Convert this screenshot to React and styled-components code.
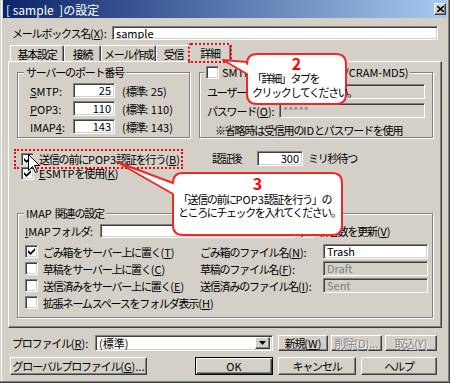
import React from "react";
import styled, { createGlobalStyle, css } from "styled-components";

const face = "#d4d0c8";
const light = "#ffffff";
const shadow = "#808080";
const dark = "#404040";
const red = "#f02828";

const GlobalStyle = createGlobalStyle`
  body { margin: 0; background: ${face}; }
  *, *::before, *::after { box-sizing: border-box; }
`;

const raised = css`
  border-top: 1px solid ${light};
  border-left: 1px solid ${light};
  border-right: 1px solid ${dark};
  border-bottom: 1px solid ${dark};
  box-shadow: inset -1px -1px 0 ${shadow};
`;

const sunken = css`
  border-top: 1px solid ${shadow};
  border-left: 1px solid ${shadow};
  border-right: 1px solid ${light};
  border-bottom: 1px solid ${light};
  box-shadow: inset 1px 1px 0 ${dark}, inset -1px -1px 0 ${face};
`;

const Window = styled.div`
  position: relative;
  width: 450px;
  height: 383px;
  padding: 0 3px 3px;
  background: ${face};
  font-family: "Noto Sans CJK JP", "Noto Sans CJK SC", sans-serif;
  font-size: 11px;
  letter-spacing: -1.2px;
  color: #000;
  overflow: hidden;
  box-shadow: inset -1px -1px 0 ${dark}, inset -2px -2px 0 ${shadow},
    inset 1px 0 0 ${face}, inset 2px 0 0 ${light};
`;

// ascii runs keep their natural spacing, kana/kanji are packed tighter
const Lat = styled.span`
  letter-spacing: 0;
`;

const Txt = ({ s }) =>
  s.split(/([\x20-\x7e]+)/).map((part, i) => {
    if (!part) return null;
    const content = part.split(/&(.)/).map((q, j) => (j % 2 ? <u key={j}>{q}</u> : q));
    return /^[\x20-\x7e]+$/.test(part) ? (
      <Lat key={i}>{content}</Lat>
    ) : (
      <React.Fragment key={i}>{content}</React.Fragment>
    );
  });

const TitleBar = styled.div`
  height: 18px;
  display: flex;
  align-items: center;
  padding: 0 1px 0 3px;
  background: linear-gradient(to right, #0a246a, #a6caf0);
  color: #fff;
  font-size: 12px;
  letter-spacing: 0;
  white-space: pre;
`;

const CloseBtn = styled.div`
  ${raised}
  margin-left: auto;
  width: 12px;
  height: 12px;
  background: ${face};
  display: flex;
  align-items: center;
  justify-content: center;
`;

const Body = styled.div`
  padding: 0 5px;
`;

const Row = styled.div`
  display: flex;
  align-items: center;
  height: ${p => p.$h || 14}px;
  margin-top: ${p => p.$mt || 0}px;
  padding-left: ${p => p.$pl || 0}px;
  white-space: nowrap;
`;

const Label = styled.span`
  flex: 0 0 ${p => p.$w}px;
  padding-left: ${p => p.$pl || 0}px;
  white-space: nowrap;
`;

const Text = styled.span`
  margin-left: ${p => p.$ml || 0}px;
  white-space: nowrap;
`;

const Field = styled.div`
  ${sunken}
  flex: 0 0 ${p => p.$w}px;
  width: ${p => p.$w}px;
  height: ${p => p.$h || 15}px;
  background: ${p => (p.$disabled ? face : light)};
  color: ${p => (p.$disabled ? shadow : "#000")};
  padding: 0 3px;
  display: flex;
  align-items: center;
  justify-content: ${p => (p.$right ? "flex-end" : "flex-start")};
  line-height: 1;
  letter-spacing: 0;
  font-size: 11px;
  white-space: nowrap;
  overflow: hidden;
`;

const Select = styled(Field)`
  padding-right: 2px;
`;

const DropBtn = styled.div`
  ${raised}
  margin-left: auto;
  width: 15px;
  height: 12px;
  background: ${face};
  display: flex;
  align-items: center;
  justify-content: center;
`;

const TabRow = styled.div`
  display: flex;
  align-items: flex-end;
  height: 16px;
  margin-top: 5px;
  padding-left: 2px;
  position: relative;
  z-index: 1;
`;

const Tab = styled.div`
  flex: 0 0 ${p => p.$w}px;
  height: ${p => (p.$active ? 18 : 16)}px;
  margin: ${p => (p.$active ? "0 -2px -1px -2px" : "0")};
  border-top: 1px solid ${light};
  border-left: 1px solid ${light};
  border-right: 1px solid ${dark};
  box-shadow: inset -1px 0 0 ${shadow};
  border-radius: 2px 2px 0 0;
  background: ${face};
  display: flex;
  align-items: center;
  justify-content: center;
  padding-bottom: ${p => (p.$active ? 2 : 0)}px;
  position: relative;
  z-index: ${p => (p.$active ? 2 : 1)};
  outline: ${p => (p.$marked ? `2px dotted #ff0000` : "none")};
  outline-offset: -1px;
`;

const Panel = styled.div`
  height: 267px;
  border-top: 1px solid ${light};
  border-left: 1px solid ${light};
  border-right: 1px solid ${dark};
  border-bottom: 1px solid ${dark};
  box-shadow: inset -1px -1px 0 ${shadow};
  padding: 10px 8px 0 8px;
`;

const GroupRow = styled.div`
  display: flex;
  gap: 9px;
`;

const Group = styled.div`
  position: relative;
  flex: 0 0 ${p => p.$w}px;
  width: ${p => p.$w}px;
  height: ${p => (p.$h ? `${p.$h}px` : "auto")};
  margin-top: ${p => p.$mt || 0}px;
  border: 1px solid ${shadow};
  box-shadow: inset 1px 1px 0 ${light}, 1px 1px 0 ${light};
  padding: ${p => p.$pad};
`;

const Legend = styled.div`
  position: absolute;
  top: -7px;
  left: ${p => p.$l || 6}px;
  padding: 0 2px;
  background: ${face};
  line-height: 13px;
  height: 13px;
  display: flex;
  align-items: center;
  gap: 3px;
  white-space: nowrap;
`;

const Stack = styled.div`
  display: flex;
  flex-direction: column;
  gap: ${p => p.$gap || 0}px;
`;

const Box = styled.span`
  ${sunken}
  flex: 0 0 13px;
  width: 13px;
  height: 13px;
  background: #fff;
  display: inline-flex;
  align-items: center;
  justify-content: center;
`;

const CheckLine = styled.span`
  display: inline-flex;
  align-items: center;
  gap: ${p => p.$gap || 5}px;
  height: 14px;
  padding-left: ${p => p.$pl || 0}px;
  outline: ${p => (p.$marked ? "2px dotted #ff0000" : "none")};
  outline-offset: 1px;
  white-space: nowrap;
`;

const ImapGrid = styled.div`
  display: grid;
  grid-template-columns: 175px 123px 105px;
  grid-auto-rows: 17px;
  align-items: center;
  margin-top: 5px;
`;

const Button = styled.div`
  ${raised}
  flex: 0 0 ${p => p.$w}px;
  height: ${p => p.$h || 17}px;
  margin-left: ${p => p.$ml || 0}px;
  background: ${face};
  display: flex;
  align-items: center;
  justify-content: center;
  white-space: nowrap;
  color: ${p => (p.$disabled ? shadow : "#000")};
  text-shadow: ${p => (p.$disabled ? `1px 1px 0 ${light}` : "none")};
  ${p =>
    p.$default &&
    css`
      border: 1px solid #000;
      box-shadow: inset 1px 1px 0 ${light}, inset -1px -1px 0 ${dark},
        inset -2px -2px 0 ${shadow};
    `}
`;

const CalloutWrap = styled.div`
  position: absolute;
  left: ${p => p.$x}px;
  top: ${p => p.$y}px;
  width: ${p => p.$w}px;
  height: ${p => p.$h}px;
  z-index: 10;
`;

const BubbleSvg = styled.svg`
  position: absolute;
  left: 0;
  top: 0;
  overflow: visible;
`;

const CalloutBody = styled.div`
  position: relative;
  margin-left: ${p => p.$bx}px;
  padding-top: ${p => p.$pt}px;
  width: ${p => p.$bw}px;
`;

const Num = styled.div`
  text-align: center;
  color: #ff0000;
  font-size: 16px;
  font-weight: bold;
  letter-spacing: 0;
  line-height: 16px;
  margin-bottom: ${p => p.$mb || 0}px;
`;

const CalloutLines = styled.div`
  padding-left: 6px;
  font-size: 11px;
  letter-spacing: -1.4px;
  line-height: ${p => p.$lh}px;
  white-space: nowrap;
`;

const Cursor = styled.svg`
  position: absolute;
  left: 28px;
  top: 154px;
  z-index: 9;
`;

const bubblePath = (x0, y0, x1, y1, r, tb, bb, tx, ty) =>
  `M${x0 + r} ${y0} H${x1 - r} Q${x1} ${y0} ${x1} ${y0 + r} V${y1 - r} Q${x1} ${y1} ${x1 - r} ${y1} H${x0 + r} Q${x0} ${y1} ${x0} ${y1 - r} V${bb} L${tx} ${ty} L${x0} ${tb} V${y0 + r} Q${x0} ${y0} ${x0 + r} ${y0} Z`;

const Check = ({ checked }) => (
  <Box>
    {checked && (
      <svg width="7" height="7" viewBox="0 0 7 7">
        <path d="M0 2 L2.5 4.5 L7 0 V2.5 L2.5 7 L0 4.5 Z" fill="#000" />
      </svg>
    )}
  </Box>
);

const Callout = ({ x, y, w, h, path, bx, bw, pt, num, numGap, lh, lines }) => (
  <CalloutWrap $x={x} $y={y} $w={w} $h={h}>
    <BubbleSvg width={w} height={h}>
      <path d={path} fill="#fff" stroke={red} strokeWidth="2" strokeLinejoin="round" />
    </BubbleSvg>
    <CalloutBody $bx={bx} $bw={bw} $pt={pt}>
      <Num $mb={numGap}>{num}</Num>
      <CalloutLines $lh={lh}>
        {lines.map(l => (
          <div key={l}>
            <Txt s={l} />
          </div>
        ))}
      </CalloutLines>
    </CalloutBody>
  </CalloutWrap>
);

const tabs = [
  { t: "基本設定", w: 54 },
  { t: "接続", w: 37 },
  { t: "メール作成", w: 55 },
  { t: "受信", w: 35 },
  { t: "詳細", w: 42, active: true },
];

const ports = [
  { l: "&SMTP:", v: "25" },
  { l: "&POP3:", v: "110" },
  { l: "IMAP&4:", v: "143" },
];

const imapRows = [
  { c: true, l: "ごみ箱をサーバー上に置く(&T)", r: "ごみ箱のファイル名(&N):", v: "Trash" },
  { c: false, l: "草稿をサーバー上に置く(&C)", r: "草稿のファイル名(&F):", v: "Draft", d: true },
  { c: false, l: "送信済みをサーバー上に置く(&E)", r: "送信済みのファイル名(&I):", v: "Sent", d: true },
  { c: false, l: "拡張ネームスペースをフォルダ表示(&H)" },
];

export default function App() {
  return (
    <>
      <GlobalStyle />
      <Window>
        <TitleBar>
          <span>[ sample  ]の設定</span>
          <CloseBtn>
            <svg width="7" height="6" viewBox="0 0 7 6">
              <path d="M0 0 L7 6 M7 0 L0 6" stroke="#000" strokeWidth="1.6" />
            </svg>
          </CloseBtn>
        </TitleBar>
        <Body>
          <Row $mt={8} $h={14}>
            <Label $w={104} $pl={4}><Txt s="メールボックス名(&X):" /></Label>
            <Field $w={326} $h={14}>sample</Field>
          </Row>

          <TabRow>
            {tabs.map(tab => (
              <Tab key={tab.t} $w={tab.w} $active={tab.active} $marked={tab.active}>
                {tab.t}
              </Tab>
            ))}
          </TabRow>

          <Panel>
            <GroupRow>
              <Group $w={173} $h={66} $pad="10px 0 0 12px">
                <Legend>サーバーのポート番号</Legend>
                <Stack $gap={3}>
                  {ports.map(p => (
                    <Row key={p.v} $h={15}>
                      <Label $w={43}><Txt s={p.l} /></Label>
                      <Field $w={42} $right>{p.v}</Field>
                      <Text $ml={7}><Txt s={`(標準: ${p.v})`} /></Text>
                    </Row>
                  ))}
                </Stack>
              </Group>

              <Group $w={234} $h={66} $pad="11px 7px 0 7px">
                <Legend $l={4}>
                  <Check />
                  <span><Txt s="SMTP認証 (PLAIN/LOGIN/CRAM-MD5)" /></span>
                </Legend>
                <Stack $gap={4}>
                  <Row $h={15}>
                    <Label $w={72}><Txt s="ユーザーID(&U):" /></Label>
                    <Field $w={146} $disabled />
                  </Row>
                  <Row $h={15}>
                    <Label $w={72}><Txt s="パスワード(&O):" /></Label>
                    <Field $w={146} $disabled>*****</Field>
                  </Row>
                  <Row $h={15} $pl={8}><Txt s="※省略時は受信用のIDとパスワードを使用" /></Row>
                </Stack>
              </Group>
            </GroupRow>

            <Row $mt={13} $h={14}>
              <Label $w={195}>
                <CheckLine $marked $pl={4}>
                  <Check checked />
                  <span><Txt s="送信の前にPOP3認証を行う(&B)" /></span>
                </CheckLine>
              </Label>
              <Label $w={45}>認証後</Label>
              <Field $w={46} $right>300</Field>
              <Text $ml={5}>ミリ秒待つ</Text>
            </Row>
            <Row $mt={1} $h={14}>
              <CheckLine $pl={4}>
                <Check checked />
                <span><Txt s="&ESMTPを使用(&K)" /></span>
              </CheckLine>
            </Row>

            <Group $w={416} $mt={33} $pad="10px 0 6px 7px">
              <Legend><Txt s="IMAP関連の設定" /></Legend>
              <Row $h={14}>
                <Label $w={75}><Txt s="&IMAPフォルダ:" /></Label>
                <Field $w={195} $h={14} />
                <CheckLine $pl={6} $gap={4}>
                  <Check />
                  <span><Txt s="新着数を更新(&V)" /></span>
                </CheckLine>
              </Row>
              <ImapGrid>
                {imapRows.map((r, i) => (
                  <React.Fragment key={i}>
                    <CheckLine>
                      <Check checked={r.c} />
                      <span><Txt s={r.l} /></span>
                    </CheckLine>
                    <span>{r.r && <Txt s={r.r} />}</span>
                    {r.v ? <Field $w={105} $disabled={r.d}>{r.v}</Field> : <span />}
                  </React.Fragment>
                ))}
              </ImapGrid>
            </Group>
          </Panel>

          <Row $mt={7} $h={16}>
            <Label $w={87} $pl={4}><Txt s="プロファイル(&R):" /></Label>
            <Select $w={178} $h={16}>
              (標準)
              <DropBtn>
                <svg width="7" height="4" viewBox="0 0 7 4">
                  <path d="M0 0 H7 L3.5 4 Z" fill="#000" />
                </svg>
              </DropBtn>
            </Select>
            <Button $w={50} $h={16} $ml={5}><Txt s="新規(&W)" /></Button>
            <Button $w={51} $h={16} $ml={3} $disabled><Txt s="削除(D)..." /></Button>
            <Button $w={52} $h={16} $ml={3} $disabled><Txt s="取込(Y)" /></Button>
          </Row>

          <Row $mt={6} $h={18}>
            <Button $w={137} $h={18} $ml={2}><Txt s="グローバルプロファイル(&G)..." /></Button>
            <Button $w={78} $h={18} $ml={48} $default><Lat>OK</Lat></Button>
            <Button $w={78} $h={18} $ml={5}>キャンセル</Button>
            <Button $w={76} $h={18} $ml={5}>ヘルプ</Button>
          </Row>
        </Body>

        <Cursor width="13" height="20" viewBox="0 0 13 20">
          <path d="M0.5 0.5 V16.5 L4.5 12.5 L7.5 18.5 L9.5 17.5 L6.5 11.5 H11.5 Z" fill="#fff" stroke="#000" strokeWidth="1" />
        </Cursor>

        <Callout
          x={218}
          y={50}
          w={132}
          h={58}
          path={bubblePath(29, 4, 128, 54, 10, 12, 24, 5, 10)}
          bx={28}
          bw={101}
          pt={5}
          num="2"
          numGap={0}
          lh={14}
          lines={["「詳細」タブを", "クリックしてください。"]}
        />
        <Callout
          x={114}
          y={158}
          w={232}
          h={81}
          path={bubblePath(59, 15, 228, 77, 10, 25, 36, 3, 4)}
          bx={58}
          bw={171}
          pt={17}
          num="3"
          numGap={2}
          lh={13}
          lines={["「送信の前にPOP3認証を行う」の", "ところにチェックを入れてください。"]}
        />
      </Window>
    </>
  );
}
